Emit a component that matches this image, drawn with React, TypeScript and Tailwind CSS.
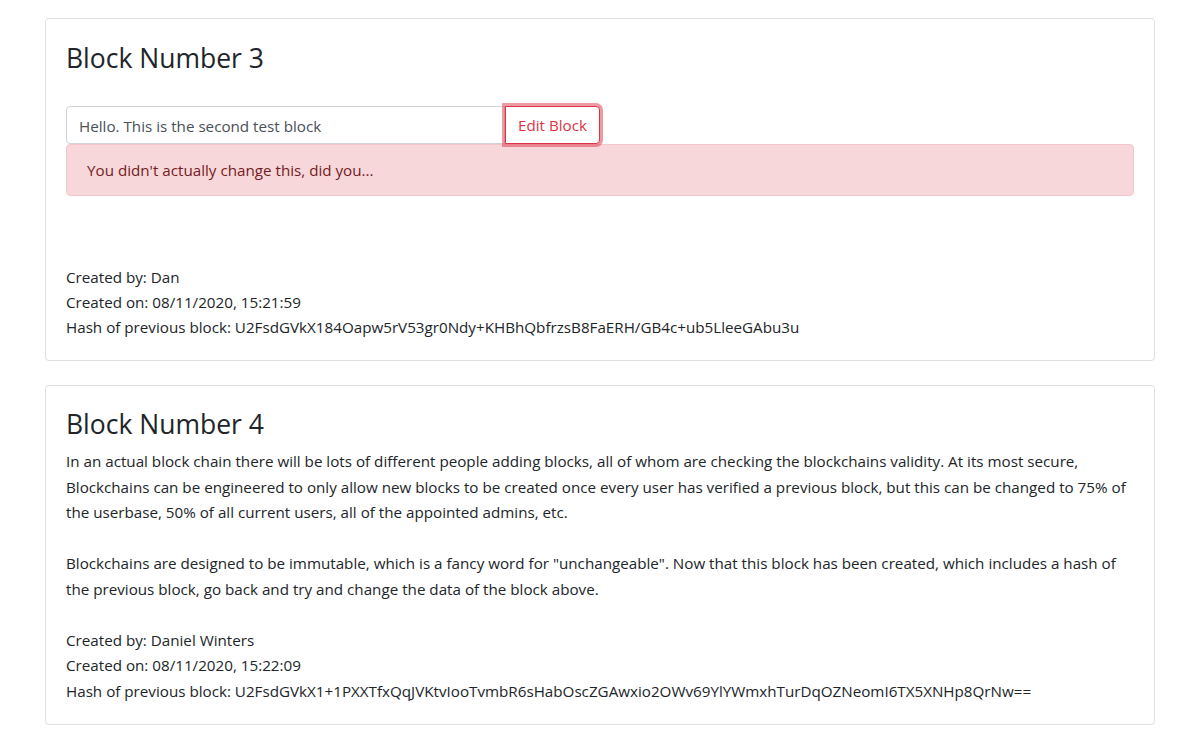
import React from "react";

const font = { fontFamily: '"Open Sans", "Noto Sans", sans-serif' };

export default function App() {
  return (
    <div className="min-h-[739px] bg-white text-[#212529] pt-[18px]" style={font}>
      <div className="ml-[45px] w-[1110px] flex flex-col gap-[24px]">
        {/* Card 1 */}
        <div className="border border-[#dfdfdf] rounded-[4px] p-[20px]">
          <h3 className="text-[26.5px] leading-[34px] font-normal m-0 pt-[2px]">Block Number 3</h3>
          <div className="mt-[31px] flex">
            <input
              readOnly
              value="Hello. This is the second test block"
              className="w-[439px] h-[38px] border border-[#ced4da] rounded-l-[4px] px-[12px] pt-[1px] text-[15.2px] text-[#495057] outline-none"
              style={font}
            />
            <button className="h-[38px] px-[12px] pt-[1px] border border-[#dc3545] rounded-r-[4px] text-[15.2px] text-[#dc3545] bg-white shadow-[0_0_0_3px_rgba(220,53,69,0.5)] relative z-10">
              Edit Block
            </button>
          </div>
          <div className="h-[52px] bg-[#f8d7da] border border-[#f5c6cb] rounded-[4px] px-[20px] pt-[1px] flex items-center text-[#721c24] text-[15.2px]">
            You didn't actually change this, did you...
          </div>
          <div className="mt-[69px] text-[15.2px] leading-[25px]">
            <div>Created by: Dan</div>
            <div>Created on: 08/11/2020, 15:21:59</div>
            <div>Hash of previous block: U2FsdGVkX184Oapw5rV53gr0Ndy+KHBhQbfrzsB8FaERH/GB4c+ub5LleeGAbu3u</div>
          </div>
        </div>

        {/* Card 2 */}
        <div className="border border-[#dfdfdf] rounded-[4px] p-[20px]">
          <h3 className="text-[26.5px] leading-[34px] font-normal m-0 pt-[1px] mb-[8px]">Block Number 4</h3>
          <div className="text-[15.2px] leading-[25.5px]">
            <div>
              In an actual block chain there will be lots of different people adding blocks, all of whom are checking the blockchains validity. At its most secure, Blockchains can be engineered to only allow new blocks to be created once every user has verified a previous block, but this can be changed to 75% of the userbase, 50% of all current users, all of the appointed admins, etc.
            </div>
            <div className="h-[25.5px]" />
            <div>
              Blockchains are designed to be immutable, which is a fancy word for "unchangeable". Now that this block has been created, which includes a hash of the previous block, go back and try and change the data of the block above.
            </div>
            <div className="h-[25.5px]" />
            <div>Created by: Daniel Winters</div>
            <div>Created on: 08/11/2020, 15:22:09</div>
            <div>Hash of previous block: U2FsdGVkX1+1PXXTfxQqJVKtvIooTvmbR6sHabOscZGAwxio2OWv69YlYWmxhTurDqOZNeomI6TX5XNHp8QrNw==</div>
          </div>
        </div>
      </div>
    </div>
  );
}
